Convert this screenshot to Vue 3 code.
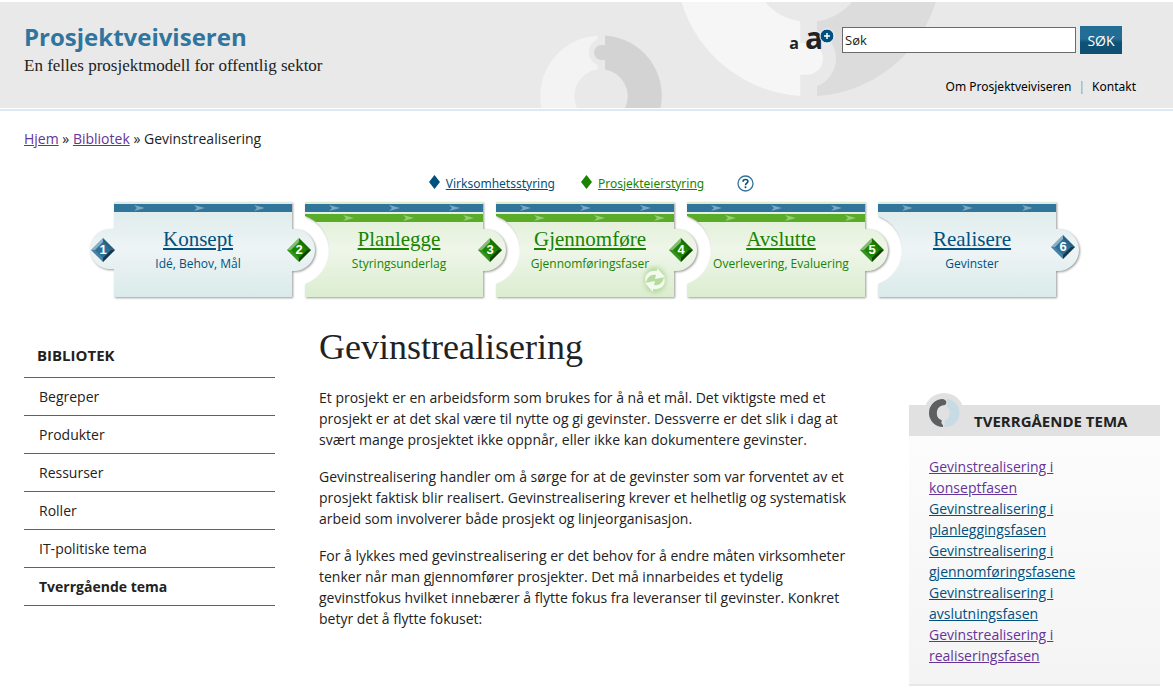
<script setup>
import { ref } from 'vue'

const query = ref('Søk')

const steps = [
  { title: 'Konsept', sub: 'Idé, Behov, Mål', tone: 'blue', first: true, next: 2, nextTone: 'green' },
  { title: 'Planlegge', sub: 'Styringsunderlag', tone: 'green', next: 3, nextTone: 'green' },
  { title: 'Gjennomføre', sub: 'Gjennomføringsfaser', tone: 'green', loop: true, next: 4, nextTone: 'green' },
  { title: 'Avslutte', sub: 'Overlevering, Evaluering', tone: 'green', next: 5, nextTone: 'green' },
  { title: 'Realisere', sub: 'Gevinster', tone: 'blue', next: 6, nextTone: 'blue' },
]

const firstShape = 'M30 0H208V27H210A21 21 0 0 1 210 69H208V95H30V67H26A20 20 0 0 1 26 27H30Z'
const notchShape = 'M30 0H208V27H210A21 21 0 0 1 210 69H208V95H30V82A36 36 0 0 0 30 14Z'

function gems(step) {
  const list = [{ x: 215, y: step.nextTone === 'blue' ? 45 : 48, color: step.nextTone === 'blue' ? '#2d6f97' : '#1c8500', label: step.next }]
  if (step.first) list.push({ x: 19, y: 48, color: '#2d6f97', label: 1 })
  return list
}

const menu = ['Begreper', 'Produkter', 'Ressurser', 'Roller', 'IT-politiske tema', 'Tverrgående tema']

const paragraphs = [
  [
    'Et prosjekt er en arbeidsform som brukes for å nå et mål. Det viktigste med et',
    'prosjekt er at det skal være til nytte og gi gevinster. Dessverre er det slik i dag at',
    'svært mange prosjektet ikke oppnår, eller ikke kan dokumentere gevinster.',
  ],
  [
    'Gevinstrealisering handler om å sørge for at de gevinster som var forventet av et',
    'prosjekt faktisk blir realisert. Gevinstrealisering krever et helhetlig og systematisk',
    'arbeid som involverer både prosjekt og linjeorganisasjon.',
  ],
  [
    'For å lykkes med gevinstrealisering er det behov for å endre måten virksomheter',
    'tenker når man gjennomfører prosjekter. Det må innarbeides et tydelig',
    'gevinstfokus hvilket innebærer å flytte fokus fra leveranser til gevinster. Konkret',
    'betyr det å flytte fokuset:',
  ],
]

const themes = [
  { phase: 'konseptfasen', visited: true },
  { phase: 'planleggingsfasen' },
  { phase: 'gjennomføringsfasene' },
  { phase: 'avslutningsfasen' },
  { phase: 'realiseringsfasen', visited: true },
]
</script>

<template>
  <div class="page">
    <header class="header">
      <svg class="rings" width="400" height="106" viewBox="540 2 400 106" aria-hidden="true">
        <path fill="#f3f3f3" d="M597.500 35.700A60.300 60.300 0 0 0 541.500 108H577A27 27 0 0 1 597.500 69.500V65A14 14 0 0 1 597.500 39Z" />
        <path fill="#d3d3d3" d="M605 35.500A60.300 60.300 0 0 1 660.500 108H625A27 27 0 0 0 605 69.500V60H601.500A7.500 7.500 0 0 1 601.500 45H605Z" />
        <path fill="#f6f6f6" d="M681.500 2A133 133 0 0 0 800.300 96V74.700H807A16 16 0 0 0 807 42.700H800.300V21.300A58 58 0 0 1 765 2Z" />
        <path fill="#dcdcdc" d="M935.700 2A133 133 0 0 1 817 96V86.300A30 30 0 0 0 817 30.500V21.300A58 58 0 0 0 852 2Z" />
      </svg>
      <div class="brand">
        <a class="logo" href="#">Prosjektveiviseren</a>
        <p class="tagline">En felles prosjektmodell for offentlig sektor</p>
      </div>
      <div class="tools">
        <form class="search" @submit.prevent>
          <button class="sizer" type="button" aria-label="Tekststørrelse">
            <span class="small-a">a</span>
            <span class="big-a">a</span>
            <svg class="plus" width="16" height="16" viewBox="0 0 16 16">
              <circle cx="8" cy="8" r="7" fill="#00517f" stroke="#fff" />
              <path d="M8 5V11M5 8H11" stroke="#fff" stroke-width="1.500" />
            </svg>
          </button>
          <input v-model="query" class="field" type="text" aria-label="Søk" />
          <button class="submit" type="submit">SØK</button>
        </form>
        <nav class="top-links">
          <a href="#">Om Prosjektveiviseren</a>
          <span class="bar">|</span>
          <a href="#">Kontakt</a>
        </nav>
      </div>
    </header>

    <nav class="crumbs">
      <a href="#">Hjem</a> » <a href="#">Bibliotek</a> » <span>Gevinstrealisering</span>
    </nav>

    <div class="legend">
      <svg width="11" height="18" viewBox="0 0 11 18"><path d="M5.500 0L11 7L5.500 14L0 7Z" fill="#00517f" /></svg>
      <a class="blue" href="#">Virksomhetsstyring</a>
      <svg class="second" width="11" height="18" viewBox="0 0 11 18"><path d="M5.500 0L11 7L5.500 14L0 7Z" fill="#188400" /></svg>
      <a class="green" href="#">Prosjekteierstyring</a>
      <button class="help" type="button" aria-label="Hjelp">
        <svg width="17" height="17" viewBox="0 0 17 17">
          <circle cx="8.500" cy="8.500" r="7.500" fill="#fff" stroke="#31759b" stroke-width="1.300" />
          <path d="M6 6.700C6 3.700 11 3.800 10.900 6.500C10.800 8.200 8.500 8.200 8.500 10.200" fill="none" stroke="#00517f" stroke-width="1.600" />
          <circle cx="8.500" cy="12.300" r="1" fill="#00517f" />
        </svg>
      </button>
    </div>

    <ol class="steps">
      <li v-for="(s, i) in steps" :key="s.title" class="step" :class="[s.tone, { first: s.first }]">
        <svg class="shape" width="238" height="102" viewBox="0 0 238 102" aria-hidden="true">
          <defs>
            <linearGradient :id="'fill' + i" x1="0" y1="0" x2="0" y2="1">
              <stop offset="0" :stop-color="s.tone === 'blue' ? '#dcebea' : '#dcedcf'" />
              <stop offset="0.500" :stop-color="s.tone === 'blue' ? '#eef4f5' : '#eff6e9'" />
              <stop offset="1" :stop-color="s.tone === 'blue' ? '#daeaea' : '#dbedd0'" />
            </linearGradient>
            <clipPath :id="'clip' + i"><path :d="s.first ? firstShape : notchShape" /></clipPath>
          </defs>
          <path class="body" :d="s.first ? firstShape : notchShape" :fill="'url(#fill' + i + ')'" />
          <g :clip-path="'url(#clip' + i + ')'">
            <rect x="30" y="2" width="178" height="8" fill="#31759b" />
            <path
              v-for="n in 3"
              :key="n"
              :transform="'translate(' + ((s.first ? 50 : 54) + (n - 1) * 60) + ' 3)'"
              d="M0 0L11 3L0 6L3 3Z"
              fill="#7ba9c2"
            />
            <template v-if="s.tone === 'green'">
              <rect x="30" y="10" width="178" height="2" fill="#e4f1ea" />
              <rect x="30" y="12" width="178" height="8" fill="#5aac28" />
              <path
                v-for="n in 3"
                :key="n"
                :transform="'translate(' + (68 + (n - 1) * 60) + ' 13)'"
                d="M0 0L11 3L0 6L3 3Z"
                fill="#98cc75"
              />
            </template>
          </g>
          <g v-for="g in gems(s)" :key="g.label" :transform="'translate(' + g.x + ' ' + g.y + ')'">
            <path d="M0 -12L12 0L0 12L-12 0Z" :fill="g.color" />
            <path d="M0 -12L-12 0H-8L0 -8Z" fill="#fff" opacity="0.450" />
            <path d="M-12 0L0 12V8L-8 0Z" fill="#fff" opacity="0.120" />
            <path d="M0 -12L12 0H8L0 -8Z" fill="#000" opacity="0.120" />
            <path d="M12 0L0 12V8L8 0Z" fill="#000" opacity="0.500" />
            <text class="num" x="0" y="4" text-anchor="middle">{{ g.label }}</text>
          </g>
          <g v-if="s.loop" transform="translate(189 78)">
            <ellipse class="glow" rx="11" ry="13" fill="#b6dba0" />
            <path d="M-9 3C-12 -5 -6 -10 2 -9L2 -12L10 -3L0 -1L1 -5C-4 -6 -8 -3 -9 3Z" fill="#f4faf0" />
            <path d="M9 -3C12 5 6 10 -2 9L-2 12L-10 3L0 1L-1 5C4 6 8 3 9 -3Z" fill="#f4faf0" />
          </g>
        </svg>
        <a class="step-title" href="#">{{ s.title }}</a>
        <span class="step-sub">{{ s.sub }}</span>
      </li>
    </ol>

    <div class="columns">
      <aside class="side">
        <h2>BIBLIOTEK</h2>
        <ul>
          <li v-for="m in menu" :key="m" :class="{ current: m === 'Tverrgående tema' }"><a href="#">{{ m }}</a></li>
        </ul>
      </aside>

      <main class="content">
        <h1>Gevinstrealisering</h1>
        <p v-for="(p, i) in paragraphs" :key="i">
          <template v-for="(line, n) in p" :key="n">{{ line }}<br v-if="n < p.length - 1" /></template>
        </p>
      </main>

      <aside class="panel">
        <div class="panel-head">
          <svg class="badge" width="40" height="40" viewBox="-20 -20 40 40" aria-hidden="true">
            <circle r="20" fill="#e1e1e1" />
            <path fill="#5d5f61" d="M-1 -14A14 14 0 0 0 -1 14L-1 12A3 3 0 0 1 -2 7.500A8 8 0 0 1 -2 -7.500L1 -8A3 3 0 0 0 1 -13Z" />
            <path fill="#c8dbe5" d="M2 -14A14 14 0 0 1 1 14L0 12A3 3 0 0 0 0 7.500A8 8 0 0 0 2 -7A4 4 0 0 0 3 -12Z" />
          </svg>
          <h2>TVERRGÅENDE TEMA</h2>
        </div>
        <ul>
          <li v-for="t in themes" :key="t.phase">
            <a href="#" :class="{ visited: t.visited }">Gevinstrealisering i<br />{{ t.phase }}</a>
          </li>
        </ul>
      </aside>
    </div>
  </div>
</template>

<style>
body {
  background: #fff;
}
</style>

<style scoped>
.page {
  font-family: "Open Sans", "Noto Sans", sans-serif;
  font-size: 14px;
  line-height: 21px;
  color: #222;
}
a {
  color: inherit;
}
ul,
ol {
  list-style: none;
  margin: 0;
  padding: 0;
}
h1,
h2,
p {
  margin: 0;
}
.header {
  position: relative;
  display: flex;
  justify-content: space-between;
  min-height: 106px;
  margin-top: 2px;
  background: #e9e9e9;
  box-shadow: 0 1px #fff, 0 3px #dce9f2;
}
.rings {
  position: absolute;
  left: 540px;
  top: 0;
}
.brand {
  padding: 19px 0 0 24px;
}
.logo {
  display: block;
  font-size: 24px;
  line-height: 32px;
  font-weight: 700;
  color: #2f759d;
  text-decoration: none;
}
.tagline {
  margin-top: 2px;
  font-family: "Liberation Serif", serif;
  font-size: 17px;
  line-height: 22px;
}
.tools {
  position: relative;
  display: flex;
  flex-direction: column;
  align-items: flex-end;
  padding: 24px 37px 0 0;
}
.search {
  display: flex;
  align-items: center;
  gap: 4px;
  height: 28px;
  margin-right: 14px;
}
button,
input {
  font: inherit;
}
.sizer {
  display: flex;
  align-items: baseline;
  gap: 6px;
  position: relative;
  margin-right: 3px;
  padding: 0 12px 0 0;
  border: 0;
  background: none;
  font-weight: 700;
  line-height: 28px;
  color: #222;
}
.small-a {
  font-size: 16px;
}
.big-a {
  font-size: 30px;
}
.plus {
  position: absolute;
  right: 0;
  top: 4px;
}
.field {
  box-sizing: border-box;
  width: 234px;
  height: 26px;
  padding: 0 2px;
  border: 1px solid #6b6b6b;
  background: #fff;
  color: #222;
  font-size: 13px;
}
.submit {
  height: 28px;
  width: 42px;
  padding: 0;
  border: 0;
  background: linear-gradient(#226d95 0 45%, #0f5075 60%);
  color: #fff;
}
.top-links {
  display: flex;
  gap: 7px;
  margin-top: 22px;
  font-family: "Noto Sans", sans-serif;
  font-size: 12px;
  color: #000;
}
.top-links a {
  text-decoration: none;
}
.bar {
  color: #999;
}
.crumbs {
  padding: 20px 24px 0;
}
.crumbs a,
.visited {
  color: #663399;
}
.legend {
  display: flex;
  justify-content: center;
  align-items: center;
  gap: 6px;
  margin-top: 24px;
  padding-left: 10px;
  font-family: "Noto Sans", sans-serif;
  font-size: 12px;
}
.blue {
  color: #00517f;
}
.green {
  color: #188400;
}
.legend .second {
  margin-left: 20px;
}
.help {
  margin-left: 27px;
  padding: 0;
  border: 0;
  background: none;
  line-height: 0;
}
.steps {
  display: flex;
  justify-content: center;
  gap: 13px;
  margin-top: 8px;
  padding-right: 3px;
}
.step {
  position: relative;
  box-sizing: border-box;
  width: 178px;
  min-height: 95px;
  padding: 24px 0 0 10px;
  display: flex;
  flex-direction: column;
  align-items: center;
}
.step.first {
  padding: 24px 10px 0 0;
}
.shape {
  position: absolute;
  left: -30px;
  top: 0;
  overflow: visible;
}
.body {
  filter: drop-shadow(1px 1px 1px rgba(0, 0, 0, 0.4));
}
.glow {
  filter: blur(2px);
}
.num {
  font: 700 13px "Liberation Sans", sans-serif;
  fill: #fff;
}
.step-title,
.step-sub {
  position: relative;
  white-space: nowrap;
}
.step-title {
  font-family: "Liberation Serif", serif;
  font-size: 21px;
  line-height: 26px;
}
.step-sub {
  font-size: 12px;
  line-height: 24px;
}
.columns {
  display: grid;
  grid-template-columns: 251px 1fr 251px;
  column-gap: 44px;
  align-items: start;
  padding: 0 13px 0 24px;
}
.side {
  padding-top: 48px;
}
.side h2 {
  padding: 0 13px 11px;
  font-size: 15px;
  border-bottom: 1px solid #2d719a;
}
.side li {
  box-sizing: border-box;
  height: 38px;
  padding: 8px 15px 0;
  border-bottom: 1px solid #2d719a;
}
.side a {
  text-decoration: none;
}
.current {
  font-weight: 700;
}
.content {
  padding-top: 26px;
}
.content h1 {
  font-family: "Liberation Serif", serif;
  font-size: 36px;
  font-weight: 400;
  line-height: 48px;
  margin-bottom: 16px;
}
.content p {
  margin-bottom: 16px;
  white-space: nowrap;
}
.panel {
  margin-top: 108px;
  border-bottom: 2px solid #e8e8e8;
  background: linear-gradient(#fdfdfd, #f4f4f4);
}
.panel-head {
  position: relative;
  padding: 6px 0 4px 65px;
  background: #e1e1e1;
}
.panel h2 {
  position: relative;
  font-size: 15px;
}
.badge {
  position: absolute;
  left: 15px;
  top: -12px;
}
.panel ul {
  padding: 20px 20px 18px;
}
.panel ul a {
  color: #00517f;
}
.panel ul .visited {
  color: #663399;
}
</style>
